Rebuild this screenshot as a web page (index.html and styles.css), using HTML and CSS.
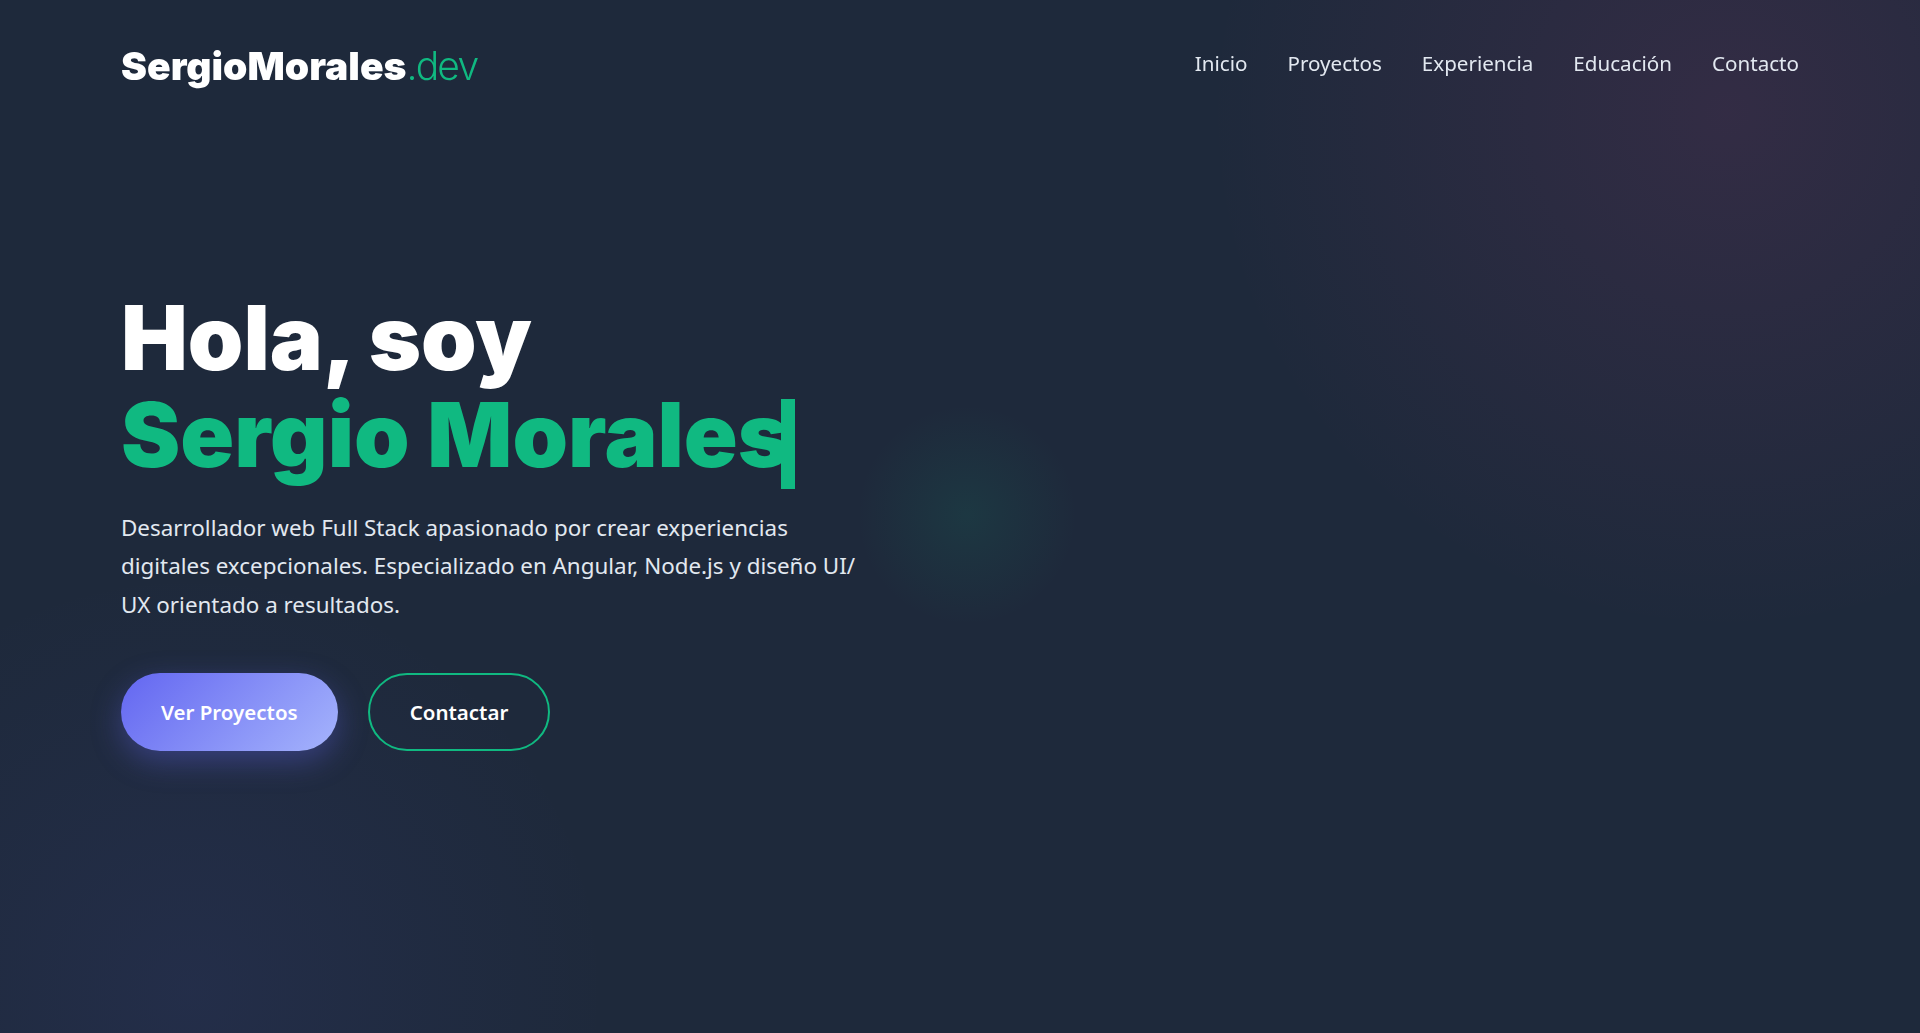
FILE: index.html
```html
<!DOCTYPE html>
<html lang="es">
<head>
<meta charset="utf-8">
<title>SergioMorales.dev</title>
<link rel="stylesheet" href="styles.css">
</head>
<body>
<header class="site-header">
  <a class="logo" href="#">SergioMorales<span class="logo-dev">.dev</span></a>
  <nav class="nav">
    <a class="nav-link" href="#">Inicio</a>
    <a class="nav-link" href="#">Proyectos</a>
    <a class="nav-link" href="#">Experiencia</a>
    <a class="nav-link" href="#">Educación</a>
    <a class="nav-link" href="#">Contacto</a>
  </nav>
</header>
<main class="hero">
  <div class="hero-content">
    <h1 class="hero-title">Hola, soy<br><span class="hero-name">Sergio Morales</span><span class="cursor"></span></h1>
    <p class="hero-text">Desarrollador web Full Stack apasionado por crear experiencias digitales excepcionales. Especializado en Angular, Node.js y diseño UI/<wbr>UX orientado a resultados.</p>
    <div class="hero-actions">
      <a class="btn btn-primary" href="#">Ver Proyectos</a>
      <a class="btn btn-outline" href="#">Contactar</a>
    </div>
  </div>
</main>
</body>
</html>
```
FILE: styles.css
```css
* { box-sizing: border-box; }

html, body {
  margin: 0;
  padding: 0;
}

body {
  font-family: "Noto Sans", "Open Sans", sans-serif;
  color: #f1f5f9;
  background-color: #1e293b;
  background-image:
    radial-gradient(circle 110px at 967px 515px, rgba(16, 185, 129, 0.10), rgba(16, 185, 129, 0) 100%),
    radial-gradient(circle 520px at 1727px 113px, rgba(236, 72, 153, 0.10), rgba(236, 72, 153, 0) 100%),
    radial-gradient(circle 420px at 190px 990px, rgba(99, 102, 241, 0.08), rgba(99, 102, 241, 0) 100%);
  background-repeat: no-repeat;
  min-height: 100vh;
  overflow: hidden;
}

a { text-decoration: none; color: inherit; }

.site-header {
  position: fixed;
  top: 0;
  left: 0;
  right: 0;
  height: 130px;
  padding: 0 121px;
  display: flex;
  align-items: center;
  justify-content: space-between;
}

.logo {
  font-family: "Inter", "Noto Sans", sans-serif;
  font-weight: 900;
  font-size: 39px;
  color: #ffffff;
  letter-spacing: 0;
}

.logo-dev {
  color: #10b981;
  font-weight: 300;
  letter-spacing: -1.8px;
}

.nav {
  display: flex;
  gap: 40px;
  padding-bottom: 5px;
}

.nav-link {
  font-size: 20.6px;
  color: #e2e8f0;
}

.hero {
  min-height: 100vh;
  display: flex;
  align-items: center;
  padding: 7px 121px 0;
}

.hero-content {
  max-width: 760px;
}

.hero-title {
  font-family: "Inter", "Noto Sans", sans-serif;
  margin: 0 0 20px;
  font-size: 89px;
  font-weight: 900;
  line-height: 97px;
  color: #ffffff;
  letter-spacing: 0;
}

.hero-name {
  color: #10b981;
}

.cursor {
  display: inline-block;
  width: 14px;
  height: 90px;
  background: #10b981;
  margin-left: -9px;
  vertical-align: -22px;
}

.hero-text {
  margin: 0 0 49px;
  font-size: 22.4px;
  line-height: 38.5px;
  color: #e2e8f0;
  max-width: 752px;
}

.hero-actions {
  display: flex;
  gap: 30px;
}

.btn {
  display: inline-flex;
  align-items: center;
  justify-content: center;
  height: 78px;
  padding: 0 40px;
  border-radius: 50px;
  font-size: 20.5px;
  font-weight: 600;
  color: #ffffff;
}

.btn-primary {
  background: linear-gradient(135deg, #6366f1 0%, #a5b4fc 100%);
  box-shadow: 0 10px 30px rgba(99, 102, 241, 0.35);
}

.btn-outline {
  border: 2px solid #10b981;
  background: transparent;
}
```
